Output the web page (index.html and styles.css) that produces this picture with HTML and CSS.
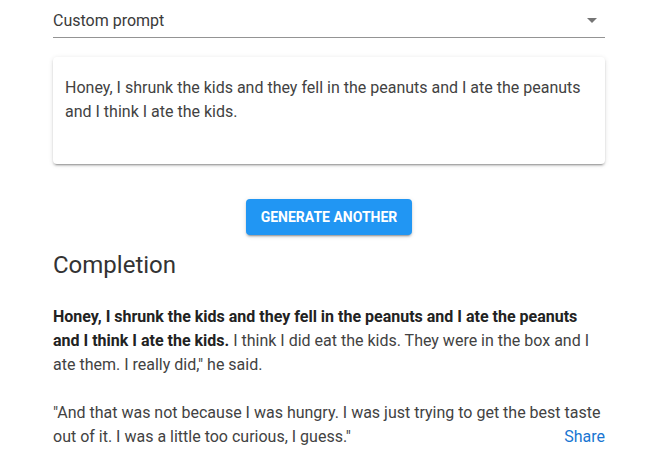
FILE: index.html
```html
<!DOCTYPE html>
<html>
<head>
<meta charset="utf-8">
<link rel="stylesheet" href="styles.css">
</head>
<body>
<div class="page">
  <div class="select">
    <span class="select-text">Custom prompt</span>
    <svg class="arrow" width="24" height="24" viewBox="0 0 24 24"><path d="M7 10l5 5 5-5z" fill="rgba(0,0,0,0.54)"/></svg>
  </div>
  <div class="card">
    <div class="card-text">Honey, I shrunk the kids and they fell in the peanuts and I ate the peanuts and I think I ate the kids.</div>
  </div>
  <div class="btn-row">
    <button class="btn">Generate another</button>
  </div>
  <h2 class="title">Completion</h2>
  <p class="para"><strong>Honey, I shrunk the kids and they fell in the peanuts and I ate the peanuts and I think I ate the kids.</strong> I think I did eat the kids. They were in the box and I ate them. I really did," he said.</p>
  <p class="para">"And that was not because I was hungry. I was just trying to get the best taste out of it. I was a little too curious, I guess."<a class="share">Share</a></p>
</div>
</body>
</html>
```
FILE: styles.css
```css
html, body {
  margin: 0;
  padding: 0;
  background: #fff;
}
body {
  font-family: Roboto, "Liberation Sans", sans-serif;
  color: #424242;
  font-size: 16px;
  line-height: 24px;
}
.page {
  width: 552px;
  margin-left: 53px;
}
.select {
  height: 37px;
  display: flex;
  align-items: center;
  justify-content: space-between;
  border-bottom: 1px solid #949494;
}
.select-text {
  font-size: 16px;
  color: #3a3a3a;
  margin-top: 4px;
}
.arrow {
  margin-right: 1px;
  margin-top: 3px;
}
.card {
  margin-top: 19px;
  height: 107px;
  box-sizing: border-box;
  padding: 19px 12px 17px;
  background: #fff;
  border-radius: 4px;
  box-shadow: 0 3px 1px -2px rgba(0,0,0,.2), 0 2px 2px 0 rgba(0,0,0,.14), 0 1px 5px 0 rgba(0,0,0,.12);
}
.card-text {
  color: #424242;
}
.btn-row {
  display: flex;
  justify-content: center;
  margin-top: 35px;
}
.btn {
  height: 36px;
  width: 166px;
  border: none;
  border-radius: 4px;
  background: #2196f3;
  color: #fff;
  font-family: Roboto, "Liberation Sans", sans-serif;
  font-size: 14px;
  font-weight: 700;
  text-transform: uppercase;
  letter-spacing: 0;
  padding: 0;
  box-shadow: 0 3px 1px -2px rgba(0,0,0,.2), 0 2px 2px 0 rgba(0,0,0,.14), 0 1px 5px 0 rgba(0,0,0,.12);
}
.title {
  margin: 14px 0 0;
  font-size: 24px;
  line-height: 32px;
  font-weight: 400;
  color: #333;
}
.para {
  margin: 24px 0 0;
}
.para + .para {
  margin-top: 24px;
}
.para strong {
  font-weight: 700;
  color: #222;
}
.share {
  float: right;
  color: #1976d2;
  cursor: pointer;
}
```
